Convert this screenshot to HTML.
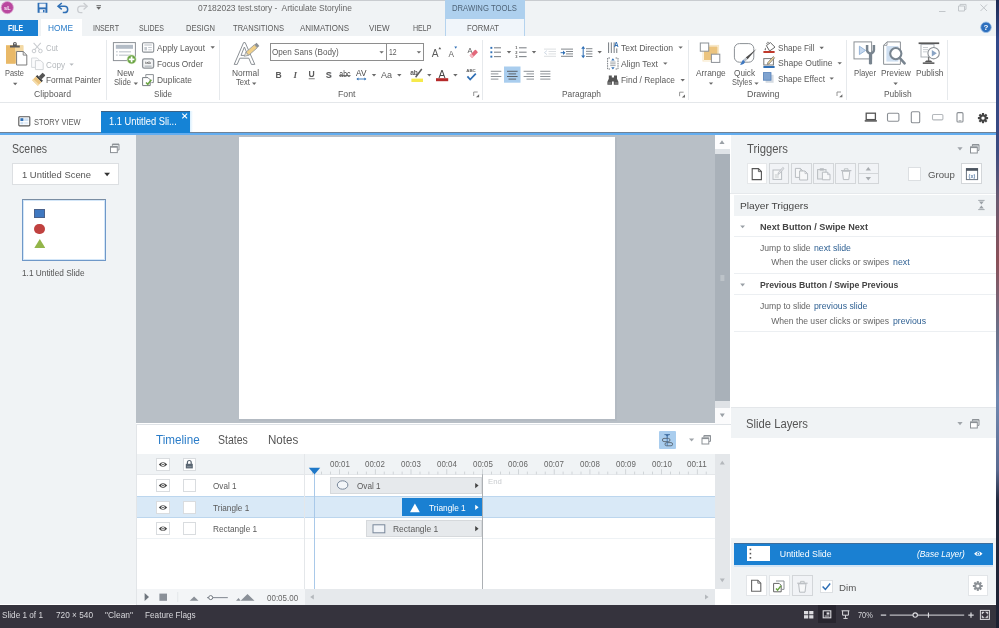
<!DOCTYPE html>
<html><head><meta charset="utf-8"><title>Storyline</title>
<style>
*{box-sizing:border-box;margin:0;padding:0}
html,body{width:999px;height:628px;overflow:hidden}
body{font-family:"Liberation Sans",sans-serif;font-size:9px;color:#555;background:linear-gradient(180deg,#1e2a52 0,#31488a 40px,#3a4a80 150px,#6a5a70 200px,#8a5058 260px,#6a7088 330px,#7088b0 400px,#5a6a90 470px,#232a40 500px,#1c2030 628px);position:relative}
.a{position:absolute}
.t{position:absolute;white-space:pre;line-height:1;transform-origin:0 50%}
#win{left:0;top:0;width:995.6px;height:628px;background:#fff;overflow:hidden;filter:blur(.45px)}
</style></head><body>
<div id="win" class="a">
<div class="a" style="left:0px;top:0px;width:996px;height:36px;background:#f0f3f5;"></div>
<div class="a" style="left:0px;top:0px;width:996px;height:1px;background:#c9ccd0;"></div>
<div class="a" style="left:444.5px;top:0px;width:80.2px;height:19.4px;background:#aed0ee;"></div>
<div class="a" style="left:444.5px;top:19.4px;width:80.2px;height:16.6px;background:#f0f5fa;border-left:1px solid #b5d3ee;border-right:1px solid #b5d3ee;"></div>
<div class="a" style="left:0px;top:20px;width:38px;height:16px;background:#1a80d2;"></div>
<div class="a" style="left:41px;top:19px;width:41px;height:17px;background:#fff;"></div>
<div class="t" style="left:197.6px;top:3.8px;font-size:9px;color:#666;transform:scaleX(0.938);">07182023 test.story -  Articulate Storyline</div>
<div class="t" style="left:451.7px;top:3.8px;font-size:8.8px;color:#4f6478;transform:scaleX(0.875);">DRAWING TOOLS</div>
<div class="t" style="left:8.0px;top:23.8px;font-size:8.5px;color:#fff;transform:scaleX(0.814);font-weight:bold;">FILE</div>
<div class="t" style="left:48.0px;top:23.8px;font-size:8.5px;color:#2a7cc8;transform:scaleX(0.980);">HOME</div>
<div class="t" style="left:93.0px;top:23.8px;font-size:8.5px;color:#5a5a5a;transform:scaleX(0.838);">INSERT</div>
<div class="t" style="left:139.0px;top:23.8px;font-size:8.5px;color:#5a5a5a;transform:scaleX(0.826);">SLIDES</div>
<div class="t" style="left:186.0px;top:23.8px;font-size:8.5px;color:#5a5a5a;transform:scaleX(0.890);">DESIGN</div>
<div class="t" style="left:233.0px;top:23.8px;font-size:8.5px;color:#5a5a5a;transform:scaleX(0.892);">TRANSITIONS</div>
<div class="t" style="left:300.0px;top:23.8px;font-size:8.5px;color:#5a5a5a;transform:scaleX(0.938);">ANIMATIONS</div>
<div class="t" style="left:369.0px;top:23.8px;font-size:8.5px;color:#5a5a5a;transform:scaleX(0.943);">VIEW</div>
<div class="t" style="left:412.5px;top:23.8px;font-size:8.5px;color:#5a5a5a;transform:scaleX(0.833);">HELP</div>
<div class="t" style="left:467.0px;top:23.8px;font-size:8.5px;color:#5a5a5a;transform:scaleX(0.907);">FORMAT</div>
<div class="a" style="left:0px;top:36px;width:996px;height:66px;background:#fff;"></div>
<div class="a" style="left:0px;top:102px;width:996px;height:1px;background:#e4e7ea;"></div>
<div class="a" style="left:105.5px;top:40px;width:1px;height:60px;background:#e6e9ec;"></div>
<div class="a" style="left:218.5px;top:40px;width:1px;height:60px;background:#e6e9ec;"></div>
<div class="a" style="left:482px;top:40px;width:1px;height:60px;background:#e6e9ec;"></div>
<div class="a" style="left:688px;top:40px;width:1px;height:60px;background:#e6e9ec;"></div>
<div class="a" style="left:845.5px;top:40px;width:1px;height:60px;background:#e6e9ec;"></div>
<div class="a" style="left:946.5px;top:40px;width:1px;height:60px;background:#e6e9ec;"></div>
<div class="a" style="left:270.3px;top:43.3px;width:116.4px;height:17.8px;background:#fff;border:1px solid #8e8e8e;"></div>
<div class="a" style="left:386px;top:43.3px;width:37.8px;height:17.8px;background:#fff;border:1px solid #8e8e8e;"></div>
<div class="t" style="left:5.0px;top:69.1px;font-size:8.8px;color:#5a5a5a;transform:scaleX(0.844);">Paste</div>
<div class="t" style="left:46.0px;top:44.1px;font-size:8.8px;color:#b4b8bc;transform:scaleX(0.876);">Cut</div>
<div class="t" style="left:46.0px;top:60.6px;font-size:8.8px;color:#b4b8bc;transform:scaleX(0.925);">Copy</div>
<div class="t" style="left:46.0px;top:76.1px;font-size:8.8px;color:#5a5a5a;transform:scaleX(0.945);">Format Painter</div>
<div class="t" style="left:34.0px;top:90.1px;font-size:8.8px;color:#5a5a5a;transform:scaleX(0.983);">Clipboard</div>
<div class="t" style="left:117.0px;top:69.1px;font-size:8.8px;color:#5a5a5a;transform:scaleX(0.965);">New</div>
<div class="t" style="left:114.0px;top:78.1px;font-size:8.8px;color:#5a5a5a;transform:scaleX(0.869);">Slide</div>
<div class="t" style="left:157.0px;top:43.6px;font-size:8.8px;color:#5a5a5a;transform:scaleX(0.943);">Apply Layout</div>
<div class="t" style="left:157.0px;top:59.6px;font-size:8.8px;color:#5a5a5a;transform:scaleX(0.941);">Focus Order</div>
<div class="t" style="left:157.0px;top:76.1px;font-size:8.8px;color:#5a5a5a;transform:scaleX(0.954);">Duplicate</div>
<div class="t" style="left:154.0px;top:90.1px;font-size:8.8px;color:#5a5a5a;transform:scaleX(0.920);">Slide</div>
<div class="t" style="left:232.0px;top:69.1px;font-size:8.8px;color:#5a5a5a;transform:scaleX(0.952);">Normal</div>
<div class="t" style="left:236.0px;top:78.1px;font-size:8.8px;color:#5a5a5a;transform:scaleX(0.867);">Text</div>
<div class="t" style="left:272.2px;top:47.8px;font-size:9.3px;color:#5a5a5a;transform:scaleX(0.873);">Open Sans (Body)</div>
<div class="t" style="left:389.0px;top:47.8px;font-size:9.3px;color:#5a5a5a;transform:scaleX(0.735);">12</div>
<div class="t" style="left:337.5px;top:90.1px;font-size:8.8px;color:#5a5a5a;transform:scaleX(0.994);">Font</div>
<div class="t" style="left:621.0px;top:43.6px;font-size:8.8px;color:#5a5a5a;transform:scaleX(0.976);">Text Direction</div>
<div class="t" style="left:621.0px;top:59.6px;font-size:8.8px;color:#5a5a5a;transform:scaleX(0.974);">Align Text</div>
<div class="t" style="left:621.0px;top:76.1px;font-size:8.8px;color:#5a5a5a;transform:scaleX(0.952);">Find / Replace</div>
<div class="t" style="left:562.0px;top:90.1px;font-size:8.8px;color:#5a5a5a;transform:scaleX(0.949);">Paragraph</div>
<div class="t" style="left:696.0px;top:69.1px;font-size:8.8px;color:#5a5a5a;transform:scaleX(0.949);">Arrange</div>
<div class="t" style="left:734.0px;top:69.1px;font-size:8.8px;color:#5a5a5a;transform:scaleX(0.933);">Quick</div>
<div class="t" style="left:731.8px;top:78.1px;font-size:8.8px;color:#5a5a5a;transform:scaleX(0.843);">Styles</div>
<div class="t" style="left:777.5px;top:43.6px;font-size:8.8px;color:#5a5a5a;transform:scaleX(0.933);">Shape Fill</div>
<div class="t" style="left:777.5px;top:59.1px;font-size:8.8px;color:#5a5a5a;transform:scaleX(0.977);">Shape Outline</div>
<div class="t" style="left:777.5px;top:75.1px;font-size:8.8px;color:#5a5a5a;transform:scaleX(0.936);">Shape Effect</div>
<div class="t" style="left:746.5px;top:90.1px;font-size:8.8px;color:#5a5a5a;transform:scaleX(1.007);">Drawing</div>
<div class="t" style="left:854.0px;top:69.1px;font-size:8.8px;color:#5a5a5a;transform:scaleX(0.882);">Player</div>
<div class="t" style="left:881.0px;top:69.1px;font-size:8.8px;color:#5a5a5a;transform:scaleX(0.949);">Preview</div>
<div class="t" style="left:915.5px;top:69.1px;font-size:8.8px;color:#5a5a5a;transform:scaleX(0.953);">Publish</div>
<div class="t" style="left:884.0px;top:90.1px;font-size:8.8px;color:#5a5a5a;transform:scaleX(0.956);">Publish</div>
<svg class="a" style="left:0;top:0" width="995" height="103" viewBox="0 0 995 103"><circle cx="7.3" cy="7.6" r="6.1" fill="#b9489f"/><circle cx="7.3" cy="7.6" r="6.1" fill="none" stroke="#d9a5cf" stroke-width="0.8"/><text x="7.3" y="10" font-size="6" font-weight="bold" fill="#fff" text-anchor="middle" font-family="Liberation Sans" textLength="6.4" lengthAdjust="spacingAndGlyphs">sL</text><path d="M37.6 2.8h9.8v10h-9.8z" fill="#2f6fb5"/><rect x="39.3" y="3.6" width="6.4" height="3.8" fill="#eef3f9"/><rect x="39.6" y="9.3" width="5.8" height="3.5" fill="#eef3f9"/><rect x="43" y="10" width="1.5" height="2.3" fill="#2f6fb5"/><path d="M58.8 6.2H64.5a3.2 3.2 0 0 1 0 6.4H62.8" fill="none" stroke="#2f6fb5" stroke-width="1.5"/><path d="M61.8 3L58 6.2L61.8 9.4" fill="none" stroke="#2f6fb5" stroke-width="1.5"/><path d="M86.4 6.2H80.9a3.2 3.2 0 0 0 0 6.4H82.4" fill="none" stroke="#c9ccd0" stroke-width="1.3"/><path d="M83.6 3L87.2 6.2L83.6 9.4" fill="none" stroke="#c9ccd0" stroke-width="1.3"/><rect x="96.4" y="5.2" width="4.6" height="1" fill="#666"/><path d="M96.4 7.1h4.6l-2.3 2.6z" fill="#666"/><path d="M939 11.5h6.5" stroke="#c2c6ca" stroke-width="1"/><path d="M958.5 6h6v5h-6zM960 6V4.4h6V9.4h-1.5" fill="none" stroke="#c2c6ca" stroke-width="1"/><path d="M980.5 4.5l6.5 6.5M987 4.5l-6.5 6.5" stroke="#c2c6ca" stroke-width="1"/><circle cx="986" cy="27.3" r="5.3" fill="#2d6fbd"/><circle cx="986" cy="27.3" r="5.3" fill="none" stroke="#9ec0e6" stroke-width="0.8"/><text x="986" y="30.2" font-size="8" font-weight="bold" fill="#fff" text-anchor="middle" font-family="Liberation Sans">?</text><rect x="6" y="45.4" width="17" height="18.2" fill="#ecc47e"/><rect x="6" y="45.4" width="9" height="18.2" fill="#e9b968"/><rect x="15" y="45.4" width="8.6" height="6" fill="#f3d9a4"/><path d="M10 47.4v-2h3v-1.6a1.9 1.9 0 0 1 3.8 0v1.6h3v2z" fill="#5a5a5a"/><circle cx="14.9" cy="43.8" r="0.8" fill="#fff"/><path d="M16.6 51.5h6.6l3.6 3.6v9.9h-10.2z" fill="#fff" stroke="#7c7c7c" stroke-width="1"/><path d="M23.2 51.5v3.6h3.6" fill="none" stroke="#7c7c7c" stroke-width="0.9"/><path d="M13.0 82.8h4.4l-2.2 2.4z" fill="#6a6a6a"/><path d="M33.6 42.8L40 50M40.8 42.8L34.4 50" stroke="#c9ccd0" stroke-width="1.1" fill="none"/><circle cx="34" cy="51" r="1.8" fill="none" stroke="#c9ccd0" stroke-width="1"/><circle cx="40.4" cy="51" r="1.8" fill="none" stroke="#c9ccd0" stroke-width="1"/><path d="M31.6 58h5.6l2 2v7.4h-7.6z" fill="#fbfbfc" stroke="#d7dadd" stroke-width="1"/><path d="M35.4 60.6h5.4l2.4 2.4v6.6h-7.8z" fill="#fbfbfc" stroke="#d2d5d8" stroke-width="1"/><path d="M69.4 63.4h4.4l-2.2 2.4z" fill="#b4b8bc"/><g transform="rotate(45 38 80)"><rect x="36" y="71.5" width="4" height="5.5" fill="#555" rx="0.8"/><rect x="34" y="77" width="8" height="2.2" fill="#444"/><rect x="34" y="79.2" width="8" height="5" fill="#ecc47e"/><rect x="34" y="82.5" width="8" height="1.7" fill="#f4dcaa"/></g><rect x="113.4" y="42.6" width="22" height="18" fill="#fff" stroke="#8c9196" stroke-width="1"/><rect x="115.8" y="44.8" width="17.2" height="4" fill="#b3bcc6"/><rect x="119" y="51.2" width="12" height="1.2" fill="#c3c9cf"/><rect x="119" y="54.6" width="12" height="1.2" fill="#c3c9cf"/><rect x="116.2" y="51" width="1.4" height="1.4" fill="#c3c9cf"/><rect x="116.2" y="54.4" width="1.4" height="1.4" fill="#c3c9cf"/><circle cx="131.6" cy="59.4" r="4.9" fill="#d5e6c4"/><circle cx="131.6" cy="59.4" r="4.2" fill="#6aa443"/><path d="M131.6 56.6v5.6M128.8 59.4h5.6" stroke="#fff" stroke-width="1.7"/><path d="M133.6 82.6h4.4l-2.2 2.4z" fill="#6a6a6a"/><rect x="142.5" y="42.7" width="11.2" height="9.4" rx="1.2" fill="#fff" stroke="#8c9196" stroke-width="1.1"/><rect x="144.4" y="44.4" width="7.4" height="1.2" fill="#c5cad0"/><rect x="144.4" y="47" width="2.6" height="3.4" fill="#c5cad0"/><rect x="148.2" y="47" width="3.6" height="1" fill="#c5cad0"/><rect x="148.2" y="49.3" width="3.6" height="1" fill="#c5cad0"/><path d="M210.5 46.3h4.4l-2.2 2.4z" fill="#6a6a6a"/><rect x="142.6" y="58.9" width="11" height="9.2" rx="1.6" fill="#f3f4f5" stroke="#8c9196" stroke-width="1.3"/><rect x="144.6" y="65.4" width="7" height="1.6" fill="#bfc4c9"/><text x="148.1" y="64.4" font-size="3.8" fill="#555" text-anchor="middle" font-family="Liberation Sans" font-weight="bold">tab</text><path d="M145.8 76.8V74.6h7.6v8h-2" fill="#fff" stroke="#8c9196" stroke-width="1"/><path d="M142.6 77.6h5.4l2.2 2.2v5.8h-7.6z" fill="#fff" stroke="#777c81" stroke-width="1"/><path d="M146 82.4l1.8 1.9l3.6-4.6" fill="none" stroke="#6aa443" stroke-width="1.5"/><path d="M234.2 64.4L243.6 42.6h1.6L254.8 64.4h-3.4l-2.6-6.2h-9l-2.6 6.2z M241 55.4h6.8l-3.4-8.4z" fill="#fff" stroke="#8c9196" stroke-width="1" fill-rule="evenodd"/><g transform="rotate(49 251.1 50.4)"><rect x="249" y="41.3" width="4.2" height="2.8" fill="#8a8f94"/><rect x="249" y="44.1" width="4.2" height="11.4" fill="#f0cf88" stroke="#8a8f94" stroke-width="0.7"/><path d="M249 55.5h4.2l-2.1 4z" fill="#ece4d4" stroke="#8a8f94" stroke-width="0.6"/></g><path d="M252.0 82.6h4.4l-2.2 2.4z" fill="#6a6a6a"/><path d="M379.4 51.2h4.4l-2.2 2.4z" fill="#6a6a6a"/><path d="M416.7 51.2h4.4l-2.2 2.4z" fill="#6a6a6a"/><text x="435.1" y="56.9" font-size="10.2" fill="#5c5c5c" text-anchor="middle" font-family="Liberation Sans">A</text><path d="M438.4 49.2h2.8l-1.4-2.2z" fill="#5c5c5c"/><text x="451.3" y="56.9" font-size="8.2" fill="#5c5c5c" text-anchor="middle" font-family="Liberation Sans">A</text><path d="M454.3 46.6h2.8l-1.4 2.2z" fill="#2f6fb5"/><text x="470" y="53.2" font-size="7.4" fill="#5c5c5c" text-anchor="middle" font-family="Liberation Sans">A</text><g transform="rotate(-45 473.5 54)"><rect x="469.6" y="52.2" width="8.4" height="3.8" rx="0.8" fill="#e2677a"/><rect x="469.6" y="52.2" width="2.6" height="3.8" fill="#f3b5bf"/></g><text x="278.7" y="77.5" font-size="8.6" font-weight="bold" fill="#5c5c5c" text-anchor="middle" font-family="Liberation Sans">B</text><text x="295.2" y="77.5" font-size="9" font-style="italic" font-weight="bold" fill="#5c5c5c" text-anchor="middle" font-family="Liberation Serif">I</text><text x="311.7" y="77.3" font-size="8.6" fill="#5c5c5c" text-anchor="middle" font-family="Liberation Sans" font-weight="bold">U</text><rect x="308.7" y="78.4" width="6" height="0.8" fill="#5c5c5c"/><text x="329.4" y="78.2" font-size="8.6" font-weight="bold" fill="#b9bcc0" text-anchor="middle" font-family="Liberation Sans">S</text><text x="328.6" y="77.5" font-size="8.6" font-weight="bold" fill="#5c5c5c" text-anchor="middle" font-family="Liberation Sans">S</text><text x="344.9" y="77.3" font-size="8.6" fill="#444" text-anchor="middle" font-family="Liberation Sans" textLength="11.2" lengthAdjust="spacingAndGlyphs">abc</text><rect x="339.3" y="75" width="11.2" height="0.8" fill="#5c5c5c"/><text x="361.3" y="76.3" font-size="9" fill="#444" text-anchor="middle" font-family="Liberation Sans" textLength="10.4" lengthAdjust="spacingAndGlyphs">AV</text><path d="M357.4 79h8" stroke="#2f6fb5" stroke-width="0.9"/><path d="M358.4 77.6L356.4 79l2 1.4zM364.4 77.6l2 1.4l-2 1.4z" fill="#2f6fb5"/><path d="M371.8 74.0h4.4l-2.2 2.4z" fill="#6a6a6a"/><text x="386.4" y="78.2" font-size="9.4" fill="#5c5c5c" text-anchor="middle" font-family="Liberation Sans" textLength="11" lengthAdjust="spacingAndGlyphs">Aa</text><path d="M397.1 74.0h4.4l-2.2 2.4z" fill="#6a6a6a"/><text x="414" y="75" font-size="6.6" fill="#5c5c5c" text-anchor="middle" font-family="Liberation Sans" font-weight="bold">ab</text><path d="M421.8 69l-6.2 8.2" stroke="#5c5c5c" stroke-width="1.5"/><rect x="411.4" y="78.6" width="11.6" height="3.4" fill="#f6ea4c"/><path d="M427.1 74.0h4.4l-2.2 2.4z" fill="#6a6a6a"/><text x="441.9" y="78.2" font-size="10.4" fill="#444" text-anchor="middle" font-family="Liberation Sans">A</text><rect x="436" y="78.2" width="12.2" height="3" fill="#b52a2a"/><path d="M453.2 74.0h4.4l-2.2 2.4z" fill="#6a6a6a"/><text x="471" y="72" font-size="4.4" font-weight="bold" fill="#5c5c5c" text-anchor="middle" font-family="Liberation Sans" textLength="9.6" lengthAdjust="spacingAndGlyphs">ABC</text><path d="M467.4 76.4l2.8 3.2l5.6-6" fill="none" stroke="#2f6fb5" stroke-width="1.7"/><path d="M473.7 96V92H477.7" fill="none" stroke="#8a8a8a" stroke-width="0.9"/><path d="M475.9 97.2H479.09999999999997V94.2z" fill="#6a6a6a"/><rect x="490.4" y="46.9" width="1.9" height="1.9" fill="#2f6fb5"/><rect x="494" y="47.25" width="7" height="1.1" fill="#82878c"/><text x="516.4" y="49.3" font-size="4" font-weight="bold" fill="#5c5c5c" text-anchor="middle" font-family="Liberation Sans">1</text><rect x="519" y="47.25" width="7.6" height="1.1" fill="#82878c"/><rect x="490.4" y="51.300000000000004" width="1.9" height="1.9" fill="#2f6fb5"/><rect x="494" y="51.650000000000006" width="7" height="1.1" fill="#82878c"/><text x="516.4" y="53.7" font-size="4" font-weight="bold" fill="#5c5c5c" text-anchor="middle" font-family="Liberation Sans">2</text><rect x="519" y="51.650000000000006" width="7.6" height="1.1" fill="#82878c"/><rect x="490.4" y="55.7" width="1.9" height="1.9" fill="#2f6fb5"/><rect x="494" y="56.050000000000004" width="7" height="1.1" fill="#82878c"/><text x="516.4" y="58.1" font-size="4" font-weight="bold" fill="#5c5c5c" text-anchor="middle" font-family="Liberation Sans">3</text><rect x="519" y="56.050000000000004" width="7.6" height="1.1" fill="#82878c"/><path d="M506.8 51.1h4.4l-2.2 2.4z" fill="#6a6a6a"/><path d="M531.8 51.1h4.4l-2.2 2.4z" fill="#6a6a6a"/><rect x="544" y="48.6" width="12" height="1" fill="#dcdfe2"/><rect x="548.5" y="51" width="7.5" height="1" fill="#dcdfe2"/><rect x="548.5" y="53.4" width="7.5" height="1" fill="#dcdfe2"/><rect x="544" y="55.8" width="12" height="1" fill="#dcdfe2"/><path d="M547 50.6l-2.6 2l2.6 2" fill="none" stroke="#d2dbe6" stroke-width="1"/><rect x="561" y="48.6" width="12" height="1" fill="#82878c"/><rect x="566" y="51" width="7" height="1" fill="#82878c"/><rect x="566" y="53.4" width="7" height="1" fill="#82878c"/><rect x="561" y="55.8" width="12" height="1" fill="#82878c"/><path d="M560.6 52.7h4" stroke="#2f6fb5" stroke-width="1"/><path d="M563 50.5l2.4 2.2l-2.4 2.2z" fill="#2f6fb5"/><rect x="586" y="48.2" width="6.4" height="1" fill="#82878c"/><rect x="586" y="50.8" width="6.4" height="1" fill="#82878c"/><rect x="586" y="53.4" width="6.4" height="1" fill="#82878c"/><rect x="586" y="56" width="6.4" height="1" fill="#82878c"/><path d="M583.2 47.8v8.6" stroke="#2f6fb5" stroke-width="1"/><path d="M581.2 48.8l2-2.8l2 2.8zM581.2 55.4l2 2.8l2-2.8z" fill="#2f6fb5"/><path d="M597.5 51.1h4.4l-2.2 2.4z" fill="#6a6a6a"/><rect x="504" y="66.5" width="16.5" height="16.2" fill="#a9cdee"/><rect x="490.8" y="70.8" width="10.5" height="1" fill="#8d9297"/><rect x="490.8" y="73.4" width="7.6" height="1" fill="#8d9297"/><rect x="490.8" y="76" width="10.5" height="1" fill="#8d9297"/><rect x="490.8" y="78.6" width="7.6" height="1" fill="#8d9297"/><rect x="507.0" y="70.8" width="10.6" height="1" fill="#5c636b"/><rect x="508.5" y="73.4" width="7.6" height="1" fill="#5c636b"/><rect x="507.0" y="76" width="10.6" height="1" fill="#5c636b"/><rect x="508.5" y="78.6" width="7.6" height="1" fill="#5c636b"/><rect x="523.6" y="70.8" width="10.4" height="1" fill="#8d9297"/><rect x="526.5" y="73.4" width="7.5" height="1" fill="#8d9297"/><rect x="523.6" y="76" width="10.4" height="1" fill="#8d9297"/><rect x="526.5" y="78.6" width="7.5" height="1" fill="#8d9297"/><rect x="540.2" y="70.8" width="10.2" height="1" fill="#8d9297"/><rect x="540.2" y="73.4" width="10.2" height="1" fill="#8d9297"/><rect x="540.2" y="76" width="10.2" height="1" fill="#8d9297"/><rect x="540.2" y="78.6" width="10.2" height="1" fill="#8d9297"/><rect x="608" y="42.4" width="1.1" height="10.6" fill="#82878c"/><rect x="610.8" y="42.4" width="1.1" height="10.6" fill="#82878c"/><rect x="613.6" y="42.4" width="1.1" height="10.6" fill="#82878c"/><text x="616.4" y="47" font-size="6.4" font-weight="bold" fill="#2f6fb5" text-anchor="middle" font-family="Liberation Sans">A</text><rect x="616.2" y="48.4" width="1.1" height="4.6" fill="#82878c"/><path d="M678.4 46.4h4.4l-2.2 2.4z" fill="#6a6a6a"/><path d="M610 58h-2.4v11h2.4M615.6 58h2.4v11h-2.4" fill="none" stroke="#7c8186" stroke-width="1" stroke-dasharray="1.6 0.8"/><rect x="610.2" y="61.6" width="5.4" height="0.9" fill="#9a9fa4"/><rect x="610.2" y="63.4" width="5.4" height="0.9" fill="#9a9fa4"/><rect x="610.2" y="65.2" width="5.4" height="0.9" fill="#9a9fa4"/><path d="M611.2 60.4l1.7-2.2l1.7 2.2zM611.2 67.2l1.7 2.2l1.7-2.2z" fill="#2f6fb5"/><path d="M663.1 62.4h4.4l-2.2 2.4z" fill="#6a6a6a"/><path d="M608.8 75.6h3v2h2.2v-2h3v3.2l1.4 3v3h-4.6v-3.4h-1.8v3.4h-4.6v-3l1.4-3z" fill="#555"/><rect x="608.2" y="82" width="3" height="2" fill="#777"/><rect x="614.8" y="82" width="3" height="2" fill="#777"/><path d="M680.5 79.0h4.4l-2.2 2.4z" fill="#6a6a6a"/><path d="M679.6 96.2V92.2H683.6" fill="none" stroke="#8a8a8a" stroke-width="0.9"/><path d="M681.8000000000001 97.4H685.0V94.4z" fill="#6a6a6a"/><rect x="704" y="46.4" width="13.6" height="13.6" fill="#ecc47e"/><rect x="703" y="45.4" width="15.6" height="15.6" fill="none" stroke="#f7e6c3" stroke-width="1"/><rect x="700.3" y="43" width="8.4" height="8.2" fill="#fff" stroke="#8c9196" stroke-width="1"/><rect x="711.4" y="54.2" width="8.4" height="8.2" fill="#fff" stroke="#8c9196" stroke-width="1"/><path d="M708.8 82.4h4.4l-2.2 2.4z" fill="#6a6a6a"/><rect x="734.4" y="43.6" width="19.4" height="18.6" rx="5" fill="#fff" stroke="#8c9196" stroke-width="1"/><path d="M756.6 48.8l-9 10.4l-1.8-1.6z" fill="#4c4c4c"/><path d="M747.6 59.2l-1.8-1.6l-2.6 2.2l1.8 2z" fill="#b9c0c8"/><path d="M745 61.8l-1.8-2c-1.6 1-1.2 3.4-3.2 4.6c2.6 0.8 4.8-0.6 5-2.6z" fill="#3f78c0"/><path d="M754.3 82.4h4.4l-2.2 2.4z" fill="#6a6a6a"/><path d="M766.4 45.6l4-3l4.6 4.6l-5.4 3.8z" fill="#fff" stroke="#666" stroke-width="1"/><path d="M769.4 43.2c-1.2-1.6-3-1-2.6 1" fill="none" stroke="#666" stroke-width="0.8"/><path d="M765.6 47.4c-1 1.4-1.4 2.2-0.6 2.8c0.8 0.4 1.4-0.8 0.6-2.8z" fill="#777"/><rect x="763.4" y="51" width="11.2" height="2" fill="#c0392b"/><path d="M819.5 46.8h4.4l-2.2 2.4z" fill="#6a6a6a"/><rect x="763.8" y="58.6" width="9.6" height="6.4" fill="#fff" stroke="#777" stroke-width="1"/><path d="M774.6 57.8l-5.4 6l-1.8 0.6l0.4-1.8l5.4-6z" fill="#f0d9a0" stroke="#666" stroke-width="0.7"/><rect x="763.4" y="66" width="11.2" height="2" fill="#2f6fb5"/><path d="M837.5 62.2h4.4l-2.2 2.4z" fill="#6a6a6a"/><rect x="765.6" y="74.8" width="8" height="8" fill="#d5dbe2"/><rect x="763.4" y="72.6" width="7.6" height="7.6" fill="#7fa3d0" stroke="#5580b8" stroke-width="0.8"/><path d="M829.5 77.4h4.4l-2.2 2.4z" fill="#6a6a6a"/><path d="M837 96V92H841" fill="none" stroke="#8a8a8a" stroke-width="0.9"/><path d="M839.2 97.2H842.4V94.2z" fill="#6a6a6a"/><rect x="854" y="41.9" width="17.6" height="17" fill="#fff" stroke="#8c9196" stroke-width="1"/><path d="M859.4 46.2l6.2 4.2l-6.2 4.2z" fill="#c5d8ee" stroke="#86a8d0" stroke-width="0.8"/><path d="M867.1 45v5a3.4 3.4 0 0 0 6.8 0v-5" fill="none" stroke="#78848f" stroke-width="2.5"/><rect x="868.9" y="53" width="3.2" height="11.6" rx="1.4" fill="#78848f"/><path d="M887 41.9h13.4v22.4h-16.8V45.3z" fill="#fff" stroke="#8c9196" stroke-width="1"/><path d="M887 41.9v3.4h-3.4" fill="none" stroke="#8c9196" stroke-width="0.9"/><rect x="886.4" y="46" width="12" height="15.6" fill="#cfdff1"/><circle cx="895.8" cy="53.6" r="5.6" fill="#fff" stroke="#78848f" stroke-width="2.1"/><path d="M899.8 58l4.8 5.4" stroke="#78848f" stroke-width="2.6" stroke-linecap="round"/><path d="M893.4 82.6h4.4l-2.2 2.4z" fill="#6a6a6a"/><rect x="918.6" y="42.4" width="20.6" height="1.7" fill="#555"/><rect x="921" y="44.4" width="13" height="12.6" fill="#fff" stroke="#a5aab0" stroke-width="0.9"/><rect x="923" y="47" width="5" height="0.9" fill="#c4c9ce"/><rect x="923" y="49.2" width="5" height="0.9" fill="#c4c9ce"/><rect x="923" y="51.4" width="4" height="0.9" fill="#c4c9ce"/><path d="M928.6 57v5" stroke="#777" stroke-width="1.4"/><path d="M924.6 62.2l1.6-1.8h4.8l1.6 1.8z" fill="#555"/><rect x="922.8" y="62.4" width="11.6" height="1.5" fill="#555"/><circle cx="933.6" cy="53.2" r="5.7" fill="#fff" stroke="#8c9196" stroke-width="1.1"/><path d="M931.8 50l5 3.2l-5 3.2z" fill="#8aa4c4"/></svg>
<div class="a" style="left:0px;top:103px;width:996px;height:29px;background:#fff;"></div>
<div class="a" style="left:0px;top:131.6px;width:996px;height:1.4px;background:#6f8296;"></div>
<div class="a" style="left:0px;top:133px;width:996px;height:2.1px;background:#62adf0;"></div>
<div class="a" style="left:189.5px;top:111px;width:3px;height:21px;background:linear-gradient(90deg,#d8efff,#fff);"></div>
<div class="a" style="left:101px;top:110.8px;width:88.6px;height:22.2px;background:#1583d6;border-top:1px solid #3a6388;"></div>
<div class="t" style="left:34.4px;top:118.0px;font-size:8.8px;color:#5a5a5a;transform:scaleX(0.851);">STORY VIEW</div>
<div class="t" style="left:108.8px;top:117.3px;font-size:10.4px;color:#fff;transform:scaleX(0.896);">1.1 Untitled Sli...</div>
<svg class="a" style="left:0;top:103px" width="996" height="32" viewBox="0 103 996 32"><rect x="18.8" y="116.7" width="11" height="9.2" rx="0.8" fill="#fff" stroke="#555" stroke-width="1.1"/><rect x="20.4" y="118.2" width="3" height="2.8" fill="#2f6fb5"/><rect x="24.2" y="118.2" width="4.2" height="2.8" fill="#cfe0f2"/><rect x="20.4" y="121.8" width="3" height="2.6" fill="#cfe0f2"/><rect x="24.2" y="121.8" width="4.2" height="2.6" fill="#e3edf8"/><path d="M182.3 113.6l4.8 4.8M187.1 113.6l-4.8 4.8" stroke="#fff" stroke-width="1.1"/><rect x="866.2" y="113.2" width="9.2" height="6.4" fill="#fff" stroke="#555" stroke-width="1.3"/><rect x="864.6" y="120" width="12.4" height="1.7" rx="0.6" fill="#666"/><rect x="887.5" y="113.2" width="11.4" height="8" rx="1.2" fill="#fff" stroke="#8a8f94" stroke-width="1.1"/><rect x="911.3" y="111.7" width="8.4" height="11" rx="1.3" fill="#fff" stroke="#8a8f94" stroke-width="1.1"/><rect x="932.5" y="114.5" width="10.4" height="5.4" rx="1.1" fill="#fff" stroke="#b4b8bc" stroke-width="1.1"/><rect x="957" y="112.6" width="6" height="9.4" rx="1.1" fill="#fff" stroke="#8a8f94" stroke-width="1.1"/><rect x="958.6" y="120.4" width="2.8" height="0.8" fill="#8a8f94"/><path d="M985.80 118.10L988.10 118.10" stroke="#444" stroke-width="2.14"/><path d="M984.98 120.08L986.61 121.71" stroke="#444" stroke-width="2.14"/><path d="M983.00 120.91L983.00 123.20" stroke="#444" stroke-width="2.14"/><path d="M981.02 120.08L979.39 121.71" stroke="#444" stroke-width="2.14"/><path d="M980.20 118.10L977.90 118.10" stroke="#444" stroke-width="2.14"/><path d="M981.02 116.12L979.39 114.49" stroke="#444" stroke-width="2.14"/><path d="M983.00 115.29L983.00 113.00" stroke="#444" stroke-width="2.14"/><path d="M984.98 116.12L986.61 114.49" stroke="#444" stroke-width="2.14"/><circle cx="983" cy="118.1" r="3.67" fill="#444"/><circle cx="983" cy="118.1" r="1.68" fill="#fff"/></svg>
<div class="a" style="left:0px;top:135.2px;width:136px;height:469px;background:#f0f3f5;"></div>
<div class="t" style="left:11.5px;top:143.0px;font-size:12px;color:#555;transform:scaleX(0.877);">Scenes</div>
<div class="a" style="left:11.5px;top:162.8px;width:107.2px;height:22.6px;background:#fff;border:1px solid #dcdfe2;"></div>
<div class="t" style="left:21.5px;top:169.8px;font-size:9.8px;color:#555;transform:scaleX(0.961);">1 Untitled Scene</div>
<div class="a" style="left:21.8px;top:199px;width:84.6px;height:62.4px;background:#fff;border:1px solid #6f98c8;border-top-color:#7a8da3;box-shadow:inset 0 0 0 1px #d3e6f8;"></div>
<div class="a" style="left:33.9px;top:208.5px;width:10.9px;height:9.9px;background:#3f78c0;border:1px solid #4a618a;"></div>
<div class="a" style="left:34.2px;top:223.7px;width:10.6px;height:10.6px;background:#c0413f;border-radius:50%;"></div>
<svg class="a" style="left:33.9px;top:238.7px;" width="11.6" height="9.5" viewBox="0 0 11.6 9.5"><path d="M5.8 0L11.6 9.5H0Z" fill="#93b54a"/></svg>
<div class="t" style="left:21.8px;top:268.5px;font-size:8.6px;color:#555;transform:scaleX(0.963);">1.1 Untitled Slide</div>
<svg class="a" style="left:0;top:135px" width="136" height="60" viewBox="0 135 136 60"><path d="M112.4 145.79999999999998V144.2H119V150.0H117.4" fill="none" stroke="#8c9196" stroke-width="1"/><rect x="112.4" y="143.79999999999998" width="6.6" height="1.3" fill="#8c9196"/><rect x="110.5" y="146.6" width="6.8" height="6" fill="#fff" stroke="#8c9196" stroke-width="1"/><rect x="110.5" y="146.2" width="6.8" height="1.5" fill="#8c9196"/><path d="M104.2 172.8h5.8l-2.9 3.4z" fill="#333"/></svg>
<div class="a" style="left:136px;top:135.2px;width:579px;height:288.3px;background:#b8bfc6;"></div>
<div class="a" style="left:238.6px;top:137.5px;width:378.4px;height:283.6px;background:#adb4bc;opacity:.4;"></div>
<div class="a" style="left:238.6px;top:137.3px;width:376.4px;height:282px;background:#fff;"></div>
<div class="a" style="left:714.5px;top:135.2px;width:15.5px;height:288.3px;background:#a9b1b9;"></div>
<div class="a" style="left:714.5px;top:135.2px;width:15.5px;height:18.4px;background:#dfe3e7;"></div>
<div class="a" style="left:714.5px;top:135.2px;width:15.5px;height:13.4px;background:#fdfdfe;"></div>
<div class="a" style="left:714.5px;top:400.5px;width:15.5px;height:7px;background:#dfe2e6;"></div>
<div class="a" style="left:714.5px;top:407.5px;width:15.5px;height:16px;background:#fbfbfc;"></div>
<div class="a" style="left:136px;top:423.5px;width:594.5px;height:1.5px;background:#dfe3e7;"></div>
<svg class="a" style="left:714px;top:135px" width="17" height="290" viewBox="714 135 17 290"><path d="M719.4 144h5.2l-2.6-3.8z" fill="#9aa0a6"/><path d="M719.8 413.4h5l-2.5 3.8z" fill="#9aa0a6"/><path d="M720.4 276h4M720.4 278h4M720.4 280h4" stroke="#d5d9dd" stroke-width="0.9"/></svg>
<div class="a" style="left:136.5px;top:425px;width:594px;height:179.5px;background:#fff;"></div>
<div class="a" style="left:136px;top:424px;width:1px;height:180.5px;background:#e2e5e8;"></div>
<div class="t" style="left:155.8px;top:434.2px;font-size:12px;color:#2a7cc8;transform:scaleX(0.973);">Timeline</div>
<div class="t" style="left:218.4px;top:434.2px;font-size:12px;color:#555;transform:scaleX(0.876);">States</div>
<div class="t" style="left:267.7px;top:434.2px;font-size:12px;color:#555;transform:scaleX(0.966);">Notes</div>
<div class="a" style="left:658.5px;top:431px;width:17.5px;height:18px;background:#a9cdee;border-radius:1px;"></div>
<div class="a" style="left:136.5px;top:454.4px;width:578px;height:20px;background:#f0f3f5;"></div>
<div class="a" style="left:136.5px;top:474.2px;width:578px;height:0.8px;background:#e4e7ea;"></div>
<div class="a" style="left:136.5px;top:496.2px;width:578px;height:22px;background:#d9e9f7;border-top:1px solid #bcd6ee;border-bottom:1px solid #bcd6ee;"></div>
<div class="a" style="left:136.5px;top:538.4px;width:578px;height:1px;background:#eef2f5;"></div>
<div class="a" style="left:304.4px;top:454.4px;width:1px;height:135px;background:#e4e7ea;"></div>
<div class="a" style="left:156.4px;top:479.0px;width:13.2px;height:13.2px;background:#fff;border:1px solid #d9dcdf;"></div>
<div class="a" style="left:182.6px;top:479.0px;width:13.4px;height:13.2px;background:#fff;border:1px solid #d9dcdf;"></div>
<div class="t" style="left:212.5px;top:481.7px;font-size:8.8px;color:#5a5a5a;transform:scaleX(0.924);">Oval 1</div>
<div class="a" style="left:156.4px;top:500.9px;width:13.2px;height:13.2px;background:#fff;border:1px solid #d9dcdf;"></div>
<div class="a" style="left:182.6px;top:500.9px;width:13.4px;height:13.2px;background:#fff;border:1px solid #d9dcdf;"></div>
<div class="t" style="left:212.5px;top:503.6px;font-size:8.8px;color:#5a5a5a;transform:scaleX(0.933);">Triangle 1</div>
<div class="a" style="left:156.4px;top:522.1px;width:13.2px;height:13.2px;background:#fff;border:1px solid #d9dcdf;"></div>
<div class="a" style="left:182.6px;top:522.1px;width:13.4px;height:13.2px;background:#fff;border:1px solid #d9dcdf;"></div>
<div class="t" style="left:212.5px;top:524.8px;font-size:8.8px;color:#5a5a5a;transform:scaleX(0.941);">Rectangle 1</div>
<div class="a" style="left:156.4px;top:458.2px;width:13.2px;height:12.6px;background:#fff;border:1px solid #d9dcdf;"></div>
<div class="a" style="left:182.6px;top:458.2px;width:13.4px;height:12.6px;background:#fff;border:1px solid #d9dcdf;"></div>
<div class="t" style="left:329.5px;top:459.9px;font-size:8.4px;color:#666;transform:scaleX(0.944);">00:01</div>
<div class="t" style="left:365.3px;top:459.9px;font-size:8.4px;color:#666;transform:scaleX(0.944);">00:02</div>
<div class="t" style="left:401.0px;top:459.9px;font-size:8.4px;color:#666;transform:scaleX(0.944);">00:03</div>
<div class="t" style="left:436.8px;top:459.9px;font-size:8.4px;color:#666;transform:scaleX(0.944);">00:04</div>
<div class="t" style="left:472.6px;top:459.9px;font-size:8.4px;color:#666;transform:scaleX(0.944);">00:05</div>
<div class="t" style="left:508.4px;top:459.9px;font-size:8.4px;color:#666;transform:scaleX(0.944);">00:06</div>
<div class="t" style="left:544.2px;top:459.9px;font-size:8.4px;color:#666;transform:scaleX(0.944);">00:07</div>
<div class="t" style="left:579.9px;top:459.9px;font-size:8.4px;color:#666;transform:scaleX(0.944);">00:08</div>
<div class="t" style="left:615.7px;top:459.9px;font-size:8.4px;color:#666;transform:scaleX(0.944);">00:09</div>
<div class="t" style="left:651.5px;top:459.9px;font-size:8.4px;color:#666;transform:scaleX(0.944);">00:10</div>
<div class="t" style="left:687.3px;top:459.9px;font-size:8.4px;color:#666;transform:scaleX(0.973);">00:11</div>
<div class="a" style="left:330.4px;top:476.6px;width:152px;height:17px;background:#e6e9ec;border:1px solid #d6d9dc;"></div>
<div class="a" style="left:366px;top:520px;width:116.4px;height:17px;background:#e6e9ec;border:1px solid #d6d9dc;"></div>
<div class="a" style="left:401.7px;top:498.4px;width:80.7px;height:17.3px;background:#1a80d2;"></div>
<div class="t" style="left:357.0px;top:481.7px;font-size:8.8px;color:#5a5a5a;transform:scaleX(0.924);">Oval 1</div>
<div class="t" style="left:428.5px;top:503.6px;font-size:8.8px;color:#fff;transform:scaleX(0.946);">Triangle 1</div>
<div class="t" style="left:392.5px;top:524.8px;font-size:8.8px;color:#5a5a5a;transform:scaleX(0.963);">Rectangle 1</div>
<div class="t" style="left:488.2px;top:477.6px;font-size:8px;color:#c8cbce;transform:scaleX(0.969);">End</div>
<div class="a" style="left:481.9px;top:474.4px;width:1.3px;height:114.6px;background:#acb0b4;"></div>
<div class="a" style="left:313.7px;top:474px;width:1px;height:115px;background:#a9c9e9;"></div>
<div class="a" style="left:714.5px;top:454.4px;width:15.5px;height:134.6px;background:#e4e7ea;"></div>
<div class="a" style="left:136.5px;top:589px;width:594px;height:15.5px;background:#f3f5f7;"></div>
<div class="a" style="left:304.6px;top:589px;width:410px;height:15.5px;background:#e6e9ec;"></div>
<div class="a" style="left:714.5px;top:589px;width:16px;height:15.5px;background:#fff;"></div>
<div class="t" style="left:266.7px;top:593.7px;font-size:8.4px;color:#666;transform:scaleX(0.954);">00:05.00</div>
<svg class="a" style="left:136px;top:425px" width="595" height="180" viewBox="136 425 595 180"><path d="M158.8 464.5Q163 459.9 167.2 464.5Q163 469.1 158.8 464.5z" fill="#444"/><circle cx="163" cy="464.5" r="1.7" fill="#fff"/><circle cx="163" cy="464.5" r="0.8" fill="#444"/><path d="M158.8 485.6Q163 481.0 167.2 485.6Q163 490.20000000000005 158.8 485.6z" fill="#444"/><circle cx="163" cy="485.6" r="1.7" fill="#fff"/><circle cx="163" cy="485.6" r="0.8" fill="#444"/><path d="M158.8 507.5Q163 502.9 167.2 507.5Q163 512.1 158.8 507.5z" fill="#444"/><circle cx="163" cy="507.5" r="1.7" fill="#fff"/><circle cx="163" cy="507.5" r="0.8" fill="#444"/><path d="M158.8 528.7Q163 524.1 167.2 528.7Q163 533.3000000000001 158.8 528.7z" fill="#444"/><circle cx="163" cy="528.7" r="1.7" fill="#fff"/><circle cx="163" cy="528.7" r="0.8" fill="#444"/><path d="M187.4 464v-1.6a1.9 1.9 0 0 1 3.8 0v1.6" fill="none" stroke="#5a6672" stroke-width="1.2"/><rect x="185.8" y="463.8" width="7" height="4.6" fill="#5a6672"/><rect x="187" y="466.4" width="4.6" height="0.8" fill="#9aa4ae"/><rect x="312.2" y="471.6" width="0.8" height="2.8" fill="#c9cdd1"/><rect x="321.2" y="471.6" width="0.8" height="2.8" fill="#c9cdd1"/><rect x="330.1" y="471.6" width="0.8" height="2.8" fill="#c9cdd1"/><rect x="339.1" y="469.2" width="0.8" height="5.2" fill="#c9cdd1"/><rect x="348.0" y="471.6" width="0.8" height="2.8" fill="#c9cdd1"/><rect x="357.0" y="471.6" width="0.8" height="2.8" fill="#c9cdd1"/><rect x="365.9" y="471.6" width="0.8" height="2.8" fill="#c9cdd1"/><rect x="374.9" y="469.2" width="0.8" height="5.2" fill="#c9cdd1"/><rect x="383.8" y="471.6" width="0.8" height="2.8" fill="#c9cdd1"/><rect x="392.8" y="471.6" width="0.8" height="2.8" fill="#c9cdd1"/><rect x="401.7" y="471.6" width="0.8" height="2.8" fill="#c9cdd1"/><rect x="410.6" y="469.2" width="0.8" height="5.2" fill="#c9cdd1"/><rect x="419.6" y="471.6" width="0.8" height="2.8" fill="#c9cdd1"/><rect x="428.5" y="471.6" width="0.8" height="2.8" fill="#c9cdd1"/><rect x="437.5" y="471.6" width="0.8" height="2.8" fill="#c9cdd1"/><rect x="446.4" y="469.2" width="0.8" height="5.2" fill="#c9cdd1"/><rect x="455.4" y="471.6" width="0.8" height="2.8" fill="#c9cdd1"/><rect x="464.3" y="471.6" width="0.8" height="2.8" fill="#c9cdd1"/><rect x="473.3" y="471.6" width="0.8" height="2.8" fill="#c9cdd1"/><rect x="482.2" y="469.2" width="0.8" height="5.2" fill="#c9cdd1"/><rect x="491.1" y="471.6" width="0.8" height="2.8" fill="#c9cdd1"/><rect x="500.1" y="471.6" width="0.8" height="2.8" fill="#c9cdd1"/><rect x="509.0" y="471.6" width="0.8" height="2.8" fill="#c9cdd1"/><rect x="518.0" y="469.2" width="0.8" height="5.2" fill="#c9cdd1"/><rect x="526.9" y="471.6" width="0.8" height="2.8" fill="#c9cdd1"/><rect x="535.9" y="471.6" width="0.8" height="2.8" fill="#c9cdd1"/><rect x="544.8" y="471.6" width="0.8" height="2.8" fill="#c9cdd1"/><rect x="553.8" y="469.2" width="0.8" height="5.2" fill="#c9cdd1"/><rect x="562.7" y="471.6" width="0.8" height="2.8" fill="#c9cdd1"/><rect x="571.6" y="471.6" width="0.8" height="2.8" fill="#c9cdd1"/><rect x="580.6" y="471.6" width="0.8" height="2.8" fill="#c9cdd1"/><rect x="589.5" y="469.2" width="0.8" height="5.2" fill="#c9cdd1"/><rect x="598.5" y="471.6" width="0.8" height="2.8" fill="#c9cdd1"/><rect x="607.4" y="471.6" width="0.8" height="2.8" fill="#c9cdd1"/><rect x="616.4" y="471.6" width="0.8" height="2.8" fill="#c9cdd1"/><rect x="625.3" y="469.2" width="0.8" height="5.2" fill="#c9cdd1"/><rect x="634.3" y="471.6" width="0.8" height="2.8" fill="#c9cdd1"/><rect x="643.2" y="471.6" width="0.8" height="2.8" fill="#c9cdd1"/><rect x="652.2" y="471.6" width="0.8" height="2.8" fill="#c9cdd1"/><rect x="661.1" y="469.2" width="0.8" height="5.2" fill="#c9cdd1"/><rect x="670.0" y="471.6" width="0.8" height="2.8" fill="#c9cdd1"/><rect x="679.0" y="471.6" width="0.8" height="2.8" fill="#c9cdd1"/><rect x="687.9" y="471.6" width="0.8" height="2.8" fill="#c9cdd1"/><rect x="696.9" y="469.2" width="0.8" height="5.2" fill="#c9cdd1"/><rect x="705.8" y="471.6" width="0.8" height="2.8" fill="#c9cdd1"/><path d="M308.8 467.8h11.4l-5.7 6.8z" fill="#1f78c8"/><ellipse cx="342.6" cy="485" rx="5.3" ry="4.2" fill="#f3f6f9" stroke="#78879a" stroke-width="1"/><path d="M410 512.2l4.9-8.8l4.9 8.8z" fill="#fff"/><rect x="373" y="524.8" width="11.8" height="8" fill="#f1f4f8" stroke="#78879a" stroke-width="1"/><path d="M475.2 483.0v5.2l3.4-2.6z" fill="#444"/><path d="M475.2 504.7v5.2l3.4-2.6z" fill="#fff"/><path d="M475.2 526.1v5.2l3.4-2.6z" fill="#444"/><path d="M664.4 434.6h5.6M667.2 434.6v3" stroke="#3f6ea2" stroke-width="0.9" fill="none"/><path d="M665.4 434.8l1.8 2l1.8-2z" fill="#3f6ea2"/><rect x="662.4" y="438.4" width="7.6" height="3.2" rx="1.6" fill="none" stroke="#5a6672" stroke-width="0.9"/><rect x="665" y="442.6" width="7.6" height="3.2" rx="1.6" fill="none" stroke="#5a6672" stroke-width="0.9"/><path d="M667.2 437v9" stroke="#3f6ea2" stroke-width="0.8"/><path d="M689 438.4h5.2l-2.6 3.2z" fill="#a0a5aa"/><path d="M703.9 437.2V435.6H710.5V441.4H708.9" fill="none" stroke="#8c9196" stroke-width="1"/><rect x="703.9" y="435.2" width="6.6" height="1.3" fill="#8c9196"/><rect x="702.0" y="438" width="6.8" height="6" fill="#fff" stroke="#8c9196" stroke-width="1"/><rect x="702.0" y="437.6" width="6.8" height="1.5" fill="#8c9196"/><path d="M719.8 464.6h5l-2.5-3.8z" fill="#b4b8bc"/><path d="M719.8 578.4h5l-2.5 3.8z" fill="#b4b8bc"/><path d="M313.8 594.6v5l-3.6-2.5z" fill="#b4b8bc"/><path d="M705 594.6v5l3.6-2.5z" fill="#b4b8bc"/><path d="M144.6 593v8l4.4-4z" fill="#6f767e"/><rect x="159.4" y="593.6" width="7.6" height="7.2" fill="#8a9098"/><rect x="177.4" y="592" width="0.8" height="10" fill="#e0e3e6"/><path d="M189.7 600.8l4.4-4.2l4.4 4.2z" fill="#8a9098"/><path d="M207 597.6h20.8" stroke="#8a9098" stroke-width="1.1"/><circle cx="210.7" cy="597.6" r="2" fill="#fff" stroke="#6f767e" stroke-width="1"/><path d="M236 600.8l2.6-2.8l2 2.8zM240.6 600.8l6.9-6.8l7 6.8z" fill="#8a9098"/></svg>
<div class="a" style="left:730.5px;top:135.2px;width:265.5px;height:469.3px;background:#f0f3f5;"></div>
<div class="t" style="left:746.7px;top:143.4px;font-size:12px;color:#555;transform:scaleX(0.939);">Triggers</div>
<div class="a" style="left:746.7px;top:163.2px;width:20.09999999999991px;height:21px;background:#fff;border:1px solid #e6e8ea;"></div>
<div class="a" style="left:768.8px;top:163.2px;width:20.200000000000045px;height:21px;background:#f1f3f6;border:1px solid #d3d6d9;"></div>
<div class="a" style="left:791px;top:163.2px;width:20.600000000000023px;height:21px;background:#f1f3f6;border:1px solid #d3d6d9;"></div>
<div class="a" style="left:813px;top:163.2px;width:20.799999999999955px;height:21px;background:#f1f3f6;border:1px solid #d3d6d9;"></div>
<div class="a" style="left:835.3px;top:163.2px;width:21.0px;height:21px;background:#f1f3f6;border:1px solid #d3d6d9;"></div>
<div class="a" style="left:857.8px;top:163.2px;width:21.0px;height:21px;background:#f1f3f6;border:1px solid #d3d6d9;"></div>
<div class="a" style="left:857.8px;top:173.4px;width:21px;height:1px;background:#d3d6d9;"></div>
<div class="a" style="left:908.2px;top:167px;width:13.2px;height:13.5px;background:#fff;border:1px solid #dcdfe2;"></div>
<div class="t" style="left:927.6px;top:169.7px;font-size:9.8px;color:#555;transform:scaleX(0.984);">Group</div>
<div class="a" style="left:961.1px;top:163.2px;width:21px;height:21px;background:#fff;border:1px solid #d3d6d9;"></div>
<div class="a" style="left:730px;top:194px;width:266px;height:213.2px;background:#fff;"></div>
<div class="a" style="left:730px;top:193.2px;width:266px;height:0.9px;background:#e6e9ec;"></div>
<div class="a" style="left:734px;top:195px;width:262px;height:20.6px;background:#f0f3f5;"></div>
<div class="t" style="left:739.8px;top:200.9px;font-size:9.8px;color:#444;transform:scaleX(1.037);">Player Triggers</div>
<div class="t" style="left:760.0px;top:222.6px;font-size:8.8px;color:#444;transform:scaleX(1.037);font-weight:bold;">Next Button / Swipe Next</div>
<div class="t" style="left:760.0px;top:243.8px;font-size:8.6px;color:#666;">Jump to slide</div>
<div class="t" style="left:814.3px;top:243.8px;font-size:8.6px;color:#2d5f92;transform:scaleX(1.019);">next slide</div>
<div class="t" style="left:771.2px;top:258.3px;font-size:8.6px;color:#666;">When the user clicks or swipes</div>
<div class="t" style="left:892.8px;top:258.3px;font-size:8.6px;color:#2d5f92;transform:scaleX(1.022);">next</div>
<div class="t" style="left:760.0px;top:280.7px;font-size:8.8px;color:#444;transform:scaleX(0.986);font-weight:bold;">Previous Button / Swipe Previous</div>
<div class="t" style="left:760.0px;top:301.9px;font-size:8.6px;color:#666;">Jump to slide</div>
<div class="t" style="left:814.3px;top:301.9px;font-size:8.6px;color:#2d5f92;transform:scaleX(1.016);">previous slide</div>
<div class="t" style="left:771.2px;top:316.7px;font-size:8.6px;color:#666;">When the user clicks or swipes</div>
<div class="t" style="left:892.8px;top:316.7px;font-size:8.6px;color:#2d5f92;transform:scaleX(1.016);">previous</div>
<div class="a" style="left:734px;top:235.79999999999998px;width:262px;height:0.9px;background:#eceff2;"></div>
<div class="a" style="left:734px;top:272.8px;width:262px;height:0.9px;background:#eceff2;"></div>
<div class="a" style="left:734px;top:294.0px;width:262px;height:0.9px;background:#eceff2;"></div>
<div class="a" style="left:734px;top:331.0px;width:262px;height:0.9px;background:#eceff2;"></div>
<div class="a" style="left:730.5px;top:407.2px;width:265.5px;height:31px;background:#f0f3f5;"></div>
<div class="a" style="left:730.5px;top:407px;width:265.5px;height:0.8px;background:#e4e7ea;"></div>
<div class="t" style="left:746.0px;top:418.0px;font-size:12px;color:#555;transform:scaleX(0.939);">Slide Layers</div>
<div class="a" style="left:730.5px;top:438.2px;width:265.5px;height:100px;background:#fff;"></div>
<div class="a" style="left:734px;top:565.2px;width:258.5px;height:1.6px;background:#d2e4f5;"></div>
<div class="a" style="left:734px;top:542.5px;width:258.5px;height:22.7px;background:#1a80d2;border-top:1px solid #3b6d9c;"></div>
<div class="a" style="left:746.7px;top:545.8px;width:23.7px;height:15.6px;background:#fff;"></div>
<div class="t" style="left:779.8px;top:549.9px;font-size:8.8px;color:#fff;">Untitled Slide</div>
<div class="t" style="left:917.0px;top:549.9px;font-size:8.8px;color:#fff;transform:scaleX(0.949);font-style:italic;">(Base Layer)</div>
<div class="a" style="left:746.2px;top:575.4px;width:20.699999999999932px;height:21px;background:#fff;border:1px solid #e2e5e8;"></div>
<div class="a" style="left:769px;top:575.4px;width:20.799999999999955px;height:21px;background:#fff;border:1px solid #e2e5e8;"></div>
<div class="a" style="left:792px;top:575.4px;width:20.700000000000045px;height:21px;background:#f1f3f6;border:1px solid #d3d6d9;"></div>
<div class="a" style="left:819.7px;top:580.2px;width:13.1px;height:12.7px;background:#fff;border:1px solid #dcdfe2;"></div>
<div class="t" style="left:838.5px;top:583.1px;font-size:9.8px;color:#555;transform:scaleX(0.987);">Dim</div>
<div class="a" style="left:967.5px;top:575.4px;width:20.5px;height:21px;background:#fff;border:1px solid #e2e5e8;"></div>
<svg class="a" style="left:730px;top:135px" width="266" height="470" viewBox="730 135 266 470"><path d="M957.4 147.2h5.2l-2.6 3.2z" fill="#a0a5aa"/><path d="M972.4 146.2V144.6H979V150.4H977.4" fill="none" stroke="#8c9196" stroke-width="1"/><rect x="972.4" y="144.2" width="6.6" height="1.3" fill="#8c9196"/><rect x="970.5" y="147" width="6.8" height="6" fill="#fff" stroke="#8c9196" stroke-width="1"/><rect x="970.5" y="146.6" width="6.8" height="1.5" fill="#8c9196"/><path d="M957.4 422h5.2l-2.6 3.2z" fill="#a0a5aa"/><path d="M972.4 421.2V419.6H979V425.4H977.4" fill="none" stroke="#8c9196" stroke-width="1"/><rect x="972.4" y="419.2" width="6.6" height="1.3" fill="#8c9196"/><rect x="970.5" y="422" width="6.8" height="6" fill="#fff" stroke="#8c9196" stroke-width="1"/><rect x="970.5" y="421.6" width="6.8" height="1.5" fill="#8c9196"/><path d="M752.2 168.6h6.199999999999999l3 3v8h-9.2z" fill="#fff" stroke="#555" stroke-width="1.1"/><path d="M758.4000000000001 168.6v3h3" fill="none" stroke="#555" stroke-width="0.8800000000000001"/><rect x="773" y="170" width="8.6" height="9.4" fill="#f7f8f9" stroke="#b9bdc1" stroke-width="1"/><path d="M784 168.4l-4.6 5.4l-1.4 0.4l0.2-1.4l4.6-5.4z" fill="#e3e5e8" stroke="#b9bdc1" stroke-width="0.8"/><rect x="774.8" y="174.6" width="4" height="0.8" fill="#b9bdc1"/><rect x="774.8" y="176.6" width="4" height="0.8" fill="#b9bdc1"/><path d="M795.4 168.4h5.0l2.4 2.4v6.6h-7.4z" fill="#f7f8f9" stroke="#b9bdc1" stroke-width="1"/><path d="M800.4 168.4v2.4h2.4" fill="none" stroke="#b9bdc1" stroke-width="0.8"/><path d="M799.6 171h5.4l2.6 2.6v6.4h-8z" fill="#f7f8f9" stroke="#b9bdc1" stroke-width="1"/><path d="M805.0 171v2.6h2.6" fill="none" stroke="#b9bdc1" stroke-width="0.8"/><rect x="817.6" y="169.6" width="8.4" height="9.4" fill="#eceef0" stroke="#b9bdc1" stroke-width="1"/><rect x="819.8" y="168.2" width="4" height="2.4" fill="#b9bdc1"/><path d="M822.4 172.2h5.199999999999999l2.4 2.4v5.199999999999999h-7.6z" fill="#f7f8f9" stroke="#b9bdc1" stroke-width="1"/><path d="M827.6 172.2v2.4h2.4" fill="none" stroke="#b9bdc1" stroke-width="0.8"/><path d="M842.4 171.2l1 8.4h5.4l1-8.4z" fill="#f7f8f9" stroke="#b9bdc1" stroke-width="1"/><path d="M841 170.6h10.4" stroke="#b9bdc1" stroke-width="1.1"/><path d="M844.4 170.4v-1.6h3.6v1.6" fill="none" stroke="#b9bdc1" stroke-width="0.9"/><path d="M865.6 170.4h5.4l-2.7-3.4z" fill="#a8acb0"/><path d="M865.6 177h5.4l-2.7 3.4z" fill="#a8acb0"/><rect x="966.4" y="168.6" width="11.2" height="11" fill="#fff" stroke="#6a7480" stroke-width="1"/><rect x="966" y="168.2" width="12" height="2.6" fill="#4c5560"/><text x="972" y="178" font-size="5.6" fill="#6a8ab0" text-anchor="middle" font-family="Liberation Sans" font-weight="bold">(x)</text><path d="M978.2 200.4h6.4M978.2 209.6h6.4" stroke="#9aa0a6" stroke-width="0.9"/><path d="M979 201.4h4.8l-2.4 3zM979 208.6h4.8l-2.4-3z" fill="#9aa0a6"/><path d="M740.2 225.4h4.8l-2.4 2.8z" fill="#9aa0a6"/><path d="M740.2 283.6h4.8l-2.4 2.8z" fill="#9aa0a6"/><rect x="749.6" y="548.6" width="1.6" height="1.6" fill="#555"/><rect x="749.6" y="552.8000000000001" width="1.6" height="1.6" fill="#555"/><rect x="749.6" y="557.0" width="1.6" height="1.6" fill="#555"/><path d="M974.0999999999999 553.8Q978.3 549.1999999999999 982.5 553.8Q978.3 558.4 974.0999999999999 553.8z" fill="#fff"/><circle cx="978.3" cy="553.8" r="1.7" fill="#1a80d2"/><circle cx="978.3" cy="553.8" r="0.9" fill="#fff"/><path d="M751.6 580.2h6.199999999999999l3 3v8h-9.2z" fill="#fff" stroke="#666" stroke-width="1.1"/><path d="M757.8000000000001 580.2v3h3" fill="none" stroke="#666" stroke-width="0.8800000000000001"/><path d="M776 581h8v8.4h-2" fill="#fff" stroke="#8c9196" stroke-width="1"/><path d="M773.6 583.4h5.6l2 2v6.4h-7.6z" fill="#fff" stroke="#666" stroke-width="1"/><path d="M776 588.4l1.6 1.7l3.4-4.4" fill="none" stroke="#6aa443" stroke-width="1.4"/><path d="M798.6 583.8l1 8.4h5.4l1-8.4z" fill="#f7f8f9" stroke="#b9bdc1" stroke-width="1"/><path d="M797.2 583.2h10.4" stroke="#b9bdc1" stroke-width="1.1"/><path d="M800.6 583v-1.6h3.6v1.6" fill="none" stroke="#b9bdc1" stroke-width="0.9"/><path d="M822.6 586.4l2.8 3l4.8-5.8" fill="none" stroke="#2f6fb5" stroke-width="1.5"/><path d="M980.50 586.00L982.70 586.00" stroke="#8c9196" stroke-width="2.06"/><path d="M979.71 587.91L981.26 589.46" stroke="#8c9196" stroke-width="2.06"/><path d="M977.80 588.70L977.80 590.90" stroke="#8c9196" stroke-width="2.06"/><path d="M975.89 587.91L974.34 589.46" stroke="#8c9196" stroke-width="2.06"/><path d="M975.10 586.00L972.90 586.00" stroke="#8c9196" stroke-width="2.06"/><path d="M975.89 584.09L974.34 582.54" stroke="#8c9196" stroke-width="2.06"/><path d="M977.80 583.30L977.80 581.10" stroke="#8c9196" stroke-width="2.06"/><path d="M979.71 584.09L981.26 582.54" stroke="#8c9196" stroke-width="2.06"/><circle cx="977.8" cy="586" r="3.53" fill="#8c9196"/><circle cx="977.8" cy="586" r="1.62" fill="#fff"/></svg>
<div class="a" style="left:0px;top:604.5px;width:996px;height:23.5px;background:#35333d;"></div>
<div class="t" style="left:2.0px;top:610.9px;font-size:8.6px;color:#d8d8dc;transform:scaleX(0.953);">Slide 1 of 1</div>
<div class="t" style="left:56.0px;top:610.9px;font-size:8.6px;color:#d8d8dc;transform:scaleX(0.961);">720 × 540</div>
<div class="t" style="left:105.0px;top:610.9px;font-size:8.6px;color:#d8d8dc;transform:scaleX(0.980);">&quot;Clean&quot;</div>
<div class="t" style="left:145.0px;top:610.9px;font-size:8.6px;color:#d8d8dc;transform:scaleX(0.956);">Feature Flags</div>
<div class="t" style="left:857.9px;top:610.8px;font-size:8.6px;color:#d8d8dc;transform:scaleX(0.860);">70%</div>
<div class="a" style="left:818.3px;top:604.5px;width:17.5px;height:18px;background:#28262f;"></div>
<svg class="a" style="left:800px;top:604px" width="196" height="24" viewBox="800 604 196 24"><rect x="804" y="611" width="4.2" height="3.3" fill="#dcdce0"/><rect x="804" y="615.2" width="4.2" height="3.3" fill="#dcdce0"/><rect x="809.2" y="611" width="4.2" height="3.3" fill="#dcdce0"/><rect x="809.2" y="615.2" width="4.2" height="3.3" fill="#dcdce0"/><rect x="823.2" y="610.8" width="7.6" height="7" fill="none" stroke="#dcdce0" stroke-width="1.1"/><rect x="826.6" y="612.4" width="2.8" height="2.2" fill="#dcdce0"/><rect x="824.6" y="615.6" width="4.8" height="0.9" fill="#dcdce0"/><path d="M841.6 610.8h7.8M842.6 611v4.2h5.8v-4.2M845.5 615.2v2.6M843.4 618.4h4.2" fill="none" stroke="#dcdce0" stroke-width="1"/><rect x="880.8" y="614.5" width="5.4" height="1.2" fill="#dcdce0"/><rect x="889.7" y="614.6" width="74.5" height="1" fill="#dcdce0"/><circle cx="915.2" cy="615.1" r="2.2" fill="#35333d" stroke="#dcdce0" stroke-width="1.1"/><rect x="927.9" y="612.6" width="1.1" height="5" fill="#dcdce0"/><path d="M968.3 615.1h5.4M971 612.4v5.4" stroke="#dcdce0" stroke-width="1.2"/><rect x="980.4" y="610.4" width="9" height="9" fill="none" stroke="#dcdce0" stroke-width="1"/><path d="M982 612v2.2l2.2-2.2zM987.8 612v2.2l-2.2-2.2zM982 617.8v-2.2l2.2 2.2zM987.8 617.8v-2.2l-2.2 2.2z" fill="#dcdce0" stroke="#dcdce0" stroke-width="0.5"/></svg>
</div>
</body></html>
